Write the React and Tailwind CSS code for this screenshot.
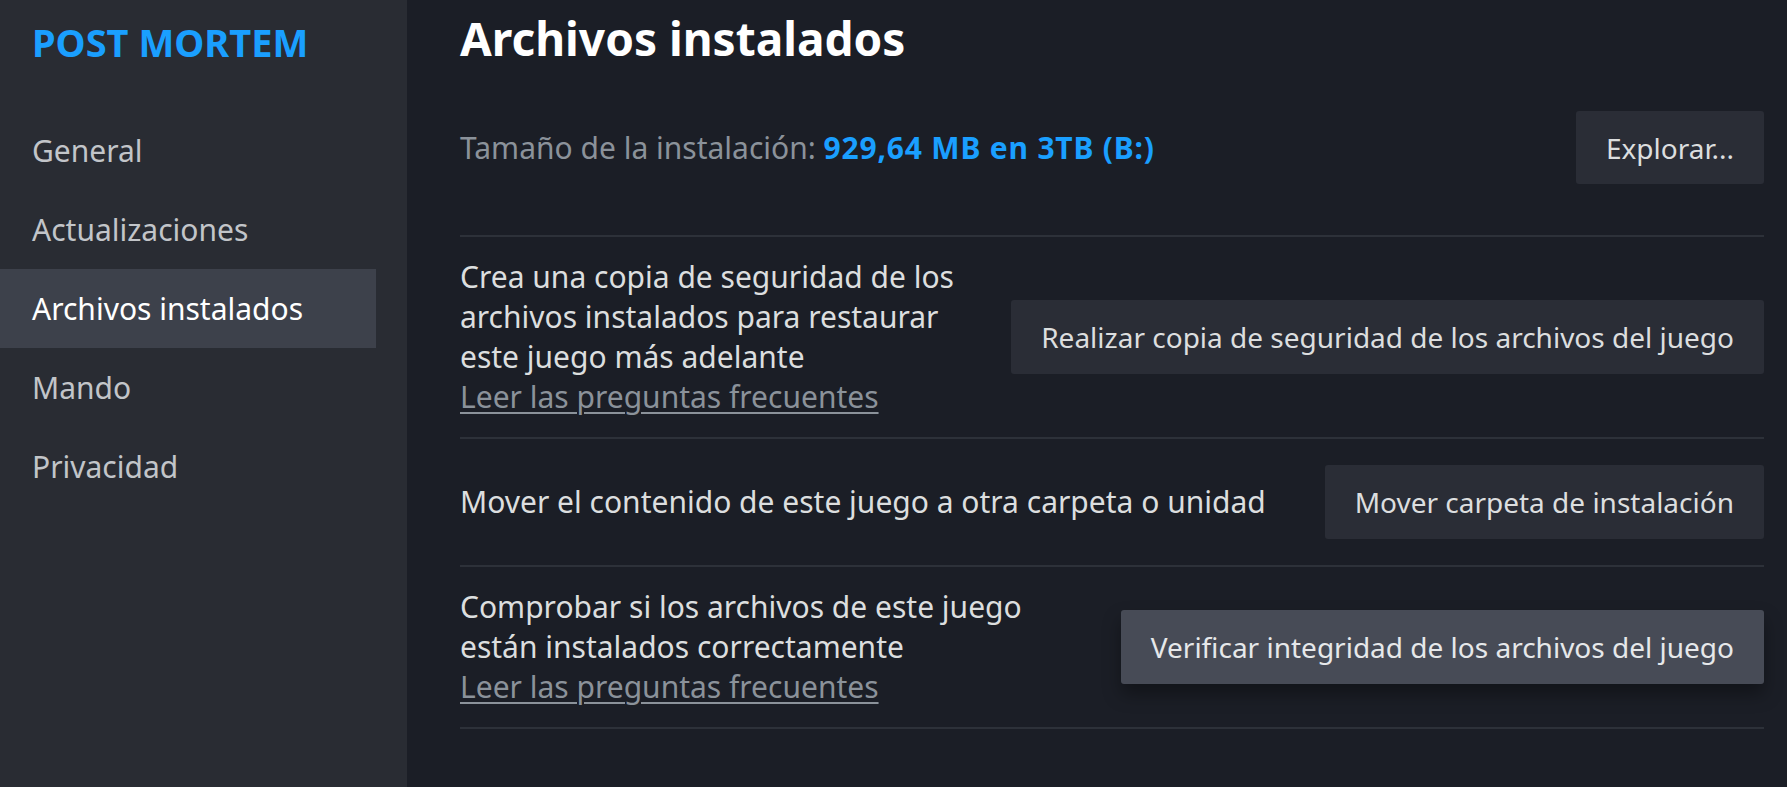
import React from 'react'

const nav = ['General', 'Actualizaciones', 'Archivos instalados', 'Mando', 'Privacidad']

function Btn({ children, active }) {
  return (
    <button
      className={
        'shrink-0 my-[6px] h-[74px] px-[30px] rounded-[3px] text-[28px] whitespace-nowrap ' +
        (active
          ? 'bg-[#474b56] text-[#e6e8ea] shadow-[0_10px_18px_rgba(0,0,0,0.35)]'
          : 'bg-[#2a2d36] text-[#dcdedf]')
      }
    >
      {children}
    </button>
  )
}

function Faq() {
  return (
    <div>
      <a className="text-[#8b929a] underline decoration-[2px] underline-offset-[4px]">Leer las preguntas frecuentes</a>
    </div>
  )
}

export default function App() {
  return (
    <div className="flex h-[787px] w-full bg-[#1b1e26] font-['Noto_Sans',sans-serif] overflow-hidden">
      <aside className="w-[407px] shrink-0 bg-[#292c33]">
        <div className="h-[84px] flex items-center pl-[32px] text-[38px] font-bold text-[#1a9fff]">POST MORTEM</div>
        <nav className="pt-[27px]">
          {nav.map(n => (
            <div
              key={n}
              className={
                'h-[79px] w-[376px] flex items-center pl-[32px] text-[30px] ' +
                (n === 'Archivos instalados' ? 'bg-[#3d414b] text-white' : 'text-[#c2c5c9]')
              }
            >
              {n}
            </div>
          ))}
        </nav>
      </aside>

      <main className="flex-1 pl-[53px] pr-[23px]">
        <h1 className="h-[76px] flex items-center text-[46px] font-bold text-white leading-none">Archivos instalados</h1>

        <div className="flex items-center justify-between pt-[35px] pb-[51px] border-b-2 border-[#2d3139]">
          <div className="text-[30px]">
            <span className="text-[#8b929a]">Tamaño de la instalación: </span>
            <span className="text-[#1a9fff] font-bold tracking-[0.8px]">929,64 MB en 3TB (B:)</span>
          </div>
          <button className="h-[73px] px-[30px] rounded-[3px] bg-[#2a2d36] text-[28px] text-[#dcdedf]">Explorar...</button>
        </div>

        <div className="flex items-center gap-[40px] py-[20px] border-b-2 border-[#2d3139]">
          <div className="flex-1 text-[30px] leading-[40px] text-[#dcdedf]">
            Crea una copia de seguridad de los<br />archivos instalados para restaurar<br />este juego más adelante
            <Faq />
          </div>
          <Btn>Realizar copia de seguridad de los archivos del juego</Btn>
        </div>

        <div className="flex items-center gap-[40px] py-[20px] border-b-2 border-[#2d3139]">
          <div className="flex-1 text-[30px] leading-[40px] text-[#dcdedf]">Mover el contenido de este juego a otra carpeta o unidad</div>
          <Btn>Mover carpeta de instalación</Btn>
        </div>

        <div className="flex items-center gap-[40px] py-[20px] border-b-2 border-[#2d3139]">
          <div className="flex-1 text-[30px] leading-[40px] text-[#dcdedf]">
            Comprobar si los archivos de este juego<br />están instalados correctamente
            <Faq />
          </div>
          <Btn active>Verificar integridad de los archivos del juego</Btn>
        </div>
      </main>
    </div>
  )
}
